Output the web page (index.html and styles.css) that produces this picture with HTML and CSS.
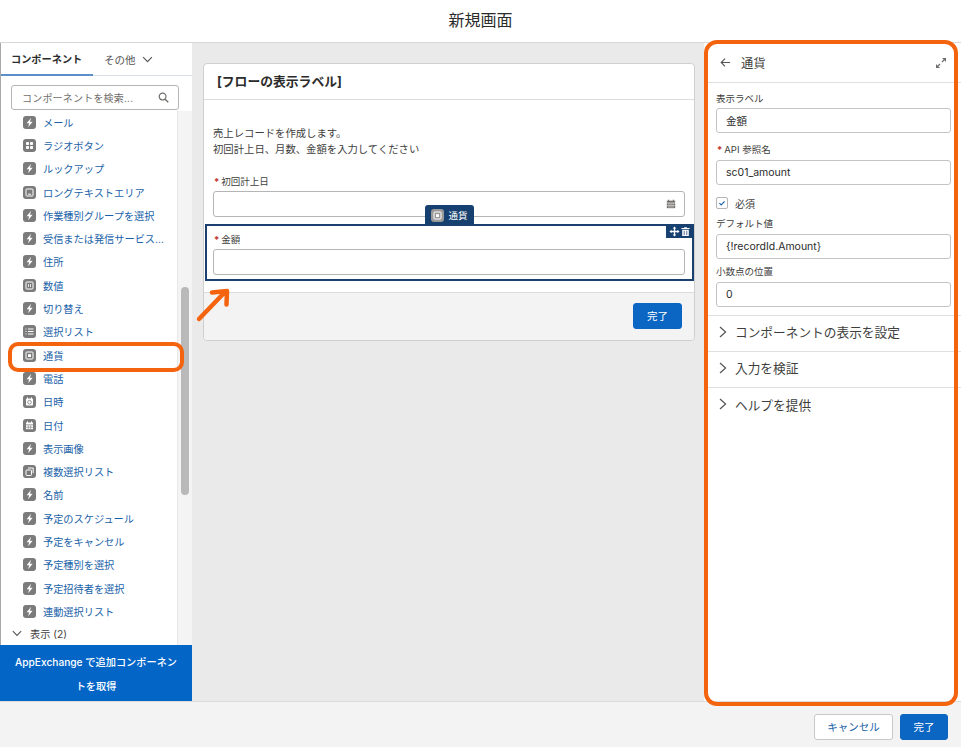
FILE: index.html
```html
<!DOCTYPE html>
<html lang="ja">
<head>
<meta charset="utf-8">
<title>新規画面</title>
<link rel="stylesheet" href="styles.css">
</head>
<body>
<svg class="defs" width="0" height="0">
  <symbol id="i-bolt" viewBox="0 0 13 13"><path d="M8.200 1.800 3.600 7.200h2.500l-.9 4 4.400-5.500H6.900z" fill="#fff"/></symbol>
  <symbol id="i-grid" viewBox="0 0 13 13"><g fill="#fff"><rect x="3" y="3" width="3" height="3" rx=".8"/><rect x="7" y="3" width="3" height="3" rx=".8"/><rect x="3" y="7" width="3" height="3" rx=".8"/><rect x="7" y="7" width="3" height="3" rx=".8"/></g></symbol>
  <symbol id="i-box" viewBox="0 0 13 13"><rect x="3" y="3" width="7" height="7" rx=".8" fill="none" stroke="#fff"/><path d="M8 8.200H5" stroke="#fff"/></symbol>
  <symbol id="i-num" viewBox="0 0 13 13"><rect x="3" y="3" width="7" height="7" rx=".8" fill="none" stroke="#fff"/><path d="M5.500 5v3M7.500 5v3" stroke="#fff" stroke-width=".8"/></symbol>
  <symbol id="i-list" viewBox="0 0 13 13"><path d="M5 4h5.500M5 6.500h5.500M5 9h5.500" stroke="#fff"/><path d="M2.500 4h1M2.500 6.500h1M2.500 9h1" stroke="#fff"/></symbol>
  <symbol id="i-cur" viewBox="0 0 13 13"><rect x="3" y="3" width="7" height="7" rx=".8" fill="none" stroke="#fff"/><rect x="5" y="5.200" width="3" height="2.800" fill="#fff"/></symbol>
  <symbol id="i-clock" viewBox="0 0 13 13"><rect x="3" y="3.500" width="7" height="7" rx="1" fill="#fff"/><path d="M4.500 2.400v2M8.500 2.400v2" stroke="#fff"/><circle cx="6.500" cy="7.200" r="1.800" fill="none" stroke="#7b7b7b" stroke-width=".8"/></symbol>
  <symbol id="i-cal" viewBox="0 0 13 13"><path d="M4.500 2.400v2M8.500 2.400v2" stroke="#fff"/><rect x="3" y="3.500" width="7" height="2" fill="#fff"/><rect x="3" y="6.200" width="7" height="4" fill="#fff"/><path d="M5.300 6.200v4M7.700 6.200v4M3 8.200h7" stroke="#7b7b7b" stroke-width=".6"/></symbol>
  <symbol id="i-multi" viewBox="0 0 13 13"><rect x="3" y="5" width="5.500" height="5.500" rx=".8" fill="none" stroke="#fff"/><path d="M5 3h5.200v5.200" fill="none" stroke="#fff"/></symbol>
</svg>

<div class="app">
  <header class="top">新規画面</header>
  <main class="main">
    <aside class="side">
      <div class="tabs">
        <span class="tab tab-on">コンポーネント</span>
        <span class="tab tab-more">その他
          <svg class="chev" viewBox="0 0 12 8" width="11" height="7"><path d="M1 1.200 6 6.400l5-5.200" fill="none" stroke="#555" stroke-width="1.300"/></svg>
        </span>
      </div>
      <div class="search-wrap">
        <div class="search">
          <span>コンポーネントを検索...</span>
          <svg viewBox="0 0 12 12" width="11" height="11"><circle cx="5" cy="5" r="3.700" fill="none" stroke="#706e6b" stroke-width="1.300"/><path d="m7.800 7.800 3.400 3.400" stroke="#706e6b" stroke-width="1.500"/></svg>
        </div>
      </div>
      <div class="list-area">
        <ul class="list">
          <li class="row"><svg class="ic"><use href="#i-bolt"/></svg>メール</li>
          <li class="row"><svg class="ic"><use href="#i-grid"/></svg>ラジオボタン</li>
          <li class="row"><svg class="ic"><use href="#i-bolt"/></svg>ルックアップ</li>
          <li class="row"><svg class="ic"><use href="#i-box"/></svg>ロングテキストエリア</li>
          <li class="row"><svg class="ic"><use href="#i-bolt"/></svg>作業種別グループを選択</li>
          <li class="row"><svg class="ic"><use href="#i-bolt"/></svg>受信または発信サービス...</li>
          <li class="row"><svg class="ic"><use href="#i-bolt"/></svg>住所</li>
          <li class="row"><svg class="ic"><use href="#i-num"/></svg>数値</li>
          <li class="row"><svg class="ic"><use href="#i-bolt"/></svg>切り替え</li>
          <li class="row"><svg class="ic"><use href="#i-list"/></svg>選択リスト</li>
          <li class="row"><svg class="ic"><use href="#i-cur"/></svg>通貨</li>
          <li class="row"><svg class="ic"><use href="#i-bolt"/></svg>電話</li>
          <li class="row"><svg class="ic"><use href="#i-clock"/></svg>日時</li>
          <li class="row"><svg class="ic"><use href="#i-cal"/></svg>日付</li>
          <li class="row"><svg class="ic"><use href="#i-bolt"/></svg>表示画像</li>
          <li class="row"><svg class="ic"><use href="#i-multi"/></svg>複数選択リスト</li>
          <li class="row"><svg class="ic"><use href="#i-bolt"/></svg>名前</li>
          <li class="row"><svg class="ic"><use href="#i-bolt"/></svg>予定のスケジュール</li>
          <li class="row"><svg class="ic"><use href="#i-bolt"/></svg>予定をキャンセル</li>
          <li class="row"><svg class="ic"><use href="#i-bolt"/></svg>予定種別を選択</li>
          <li class="row"><svg class="ic"><use href="#i-bolt"/></svg>予定招待者を選択</li>
          <li class="row"><svg class="ic"><use href="#i-bolt"/></svg>連動選択リスト</li>
          <li class="group"><svg class="chev" viewBox="0 0 12 8" width="10" height="7"><path d="M1 1.200 6 6.400l5-5.200" fill="none" stroke="#555" stroke-width="1.300"/></svg>表示 (2)</li>
        </ul>
        <div class="track"><div class="thumb"></div></div>
      </div>
      <div class="exchange">AppExchange で追加コンポーネントを取得</div>
    </aside>

    <section class="canvas">
      <div class="card">
        <div class="card-head">[フローの表示ラベル]</div>
        <div class="card-body">
          <p class="intro">売上レコードを作成します。<br>初回計上日、月数、金額を入力してください</p>
          <div class="field">
            <div class="flabel"><span class="req">*</span>初回計上日</div>
            <div class="finput">
              <svg viewBox="0 0 12 12" width="10" height="10"><path d="M3.200.8v2M8.800.8v2" stroke="#706e6b" stroke-width="1.200"/><path d="M1 2h10v2.400H1z" fill="#706e6b"/><path d="M1 5.200h10V11H1z" fill="#706e6b"/><path d="M3.600 5.200V11M6 5.200V11M8.400 5.200V11M1 8h10" stroke="#fff" stroke-width=".6"/></svg>
            </div>
          </div>
          <div class="selected">
            <div class="sel-tab"><span class="sel-ic"><svg viewBox="0 0 13 13" width="13" height="13"><rect x="3" y="3" width="7" height="7" rx=".8" fill="none" stroke="#fff"/><rect x="5" y="5.200" width="3" height="2.800" fill="#fff"/></svg></span>通貨</div>
            <div class="sel-act">
              <svg viewBox="0 0 12 12" width="11" height="11"><path d="M6 .5 8 2.800H6.700v2.500h2.500V4L11.500 6 9.200 8V6.700H6.700v2.500H8L6 11.500 4 9.200h1.300V6.700H2.800V8L.5 6l2.300-2v1.300h2.500V2.800H4z" fill="#fff"/></svg>
              <svg viewBox="0 0 12 12" width="11" height="11"><path d="M1.500 2.200h9v1.200h-9zM4.500 1h3v1h-3zM2.400 4.200h7.200V11H2.400z" fill="#fff"/><path d="M4.600 5.200v4.800M7.400 5.200v4.800" stroke="#16406f" stroke-width=".8"/></svg>
            </div>
            <div class="flabel"><span class="req">*</span>金額</div>
            <div class="finput"></div>
          </div>
        </div>
        <div class="card-foot"><button class="btn btn-pri">完了</button></div>
      </div>
    </section>

    <aside class="panel">
      <div class="p-head">
        <svg class="p-back" viewBox="0 0 12 12" width="11" height="11"><path d="M11 6H1.500M5.500 1.800 1.300 6l4.200 4.200" fill="none" stroke="#555" stroke-width="1.200"/></svg>
        <span class="p-title">通貨</span>
        <svg class="p-exp" viewBox="0 0 12 12" width="12" height="12"><path d="M7 1h4v4zM1 11V7l4 4z" fill="#706e6b"/><path d="m9 3-2 2M3 9l2-2" stroke="#706e6b" stroke-width="1.200"/></svg>
      </div>
      <div class="p-form">
        <div class="plabel">表示ラベル</div>
        <div class="pinput">金額</div>
        <div class="plabel plabel-gap"><span class="req">*</span>API 参照名</div>
        <div class="pinput">sc01_amount</div>
        <div class="check"><span class="box"><svg viewBox="0 0 10 10" width="10" height="10"><path d="m2.400 5.200 1.800 1.700 3.400-3.600" fill="none" stroke="#1b5fa8" stroke-width="1.100"/></svg></span>必須</div>
        <div class="plabel plabel-tight">デフォルト値</div>
        <div class="pinput">{!recordId.Amount}</div>
        <div class="plabel plabel-mid">小数点の位置</div>
        <div class="pinput">0</div>
      </div>
      <div class="acc"><svg viewBox="0 0 8 12" width="8" height="12"><path d="m1 1 5.600 5L1 11" fill="none" stroke="#555" stroke-width="1.200"/></svg>コンポーネントの表示を設定</div>
      <div class="acc"><svg viewBox="0 0 8 12" width="8" height="12"><path d="m1 1 5.600 5L1 11" fill="none" stroke="#555" stroke-width="1.200"/></svg>入力を検証</div>
      <div class="acc acc-last"><svg viewBox="0 0 8 12" width="8" height="12"><path d="m1 1 5.600 5L1 11" fill="none" stroke="#555" stroke-width="1.200"/></svg>ヘルプを提供</div>
    </aside>
  </main>
  <footer class="foot">
    <button class="btn btn-sec">キャンセル</button>
    <button class="btn btn-pri btn-end">完了</button>
  </footer>

  <div class="mark mark-panel"></div>
  <div class="mark mark-row"></div>
  <svg class="mark-arrow" viewBox="0 0 40 40" width="40" height="40"><path d="M6 34 31 8M19 7.500l15-1.500-.5 13.500" fill="none" stroke="#f4640f" stroke-width="4.500" stroke-linecap="round" stroke-linejoin="round"/></svg>
</div>
</body>
</html>
```
FILE: styles.css
```css
* { box-sizing: border-box; }
html, body { margin: 0; padding: 0; }
body {
  width: 961px;
  height: 747px;
  overflow: hidden;
  font-family: Inter, "Noto Sans CJK JP", sans-serif;
  color: #3e3e3c;
  background: #fff;
}
.defs { position: absolute; }
.app { position: relative; display: flex; flex-direction: column; height: 747px; }
.top {
  height: 43px;
  flex: none;
  display: flex;
  align-items: center;
  justify-content: center;
  padding-bottom: 5px;
  font-size: 16px;
  color: #2b2b2b;
  background: #fff;
  border-bottom: 1px solid #d8d8d8;
}
.main { flex: 1; display: flex; min-height: 0; }

/* left */
.side {
  width: 192px;
  flex: none;
  display: flex;
  flex-direction: column;
  background: #fff;
  border-left: 1px solid #a8a8a8;
}
.tabs {
  height: 33px;
  flex: none;
  display: flex;
  border-bottom: 1px solid #d8dde6;
  font-size: 10.200px;
}
.tab { display: flex; align-items: center; }
.tab-on {
  width: 92px;
  padding-left: 10px;
  font-weight: 700;
  color: #2b2b2b;
  border-bottom: 2px solid #5b8fc9;
  margin-bottom: -1px;
}
.tab-more { padding-left: 11px; gap: 6px; color: #555; font-size: 10.500px; }
.search-wrap { flex: none; padding: 9px 13px .5px 10px; }
.search {
  height: 25px;
  display: flex;
  align-items: center;
  justify-content: space-between;
  padding: 0 9px 0 10px;
  border: 1px solid #b5b5b5;
  border-radius: 3px;
  font-size: 10px;
  letter-spacing: .2px;
  color: #706e6b;
}
.list-area { flex: 1; min-height: 0; position: relative; display: flex; }
.list {
  flex: 1;
  list-style: none;
  margin: 0;
  padding: 0;
  overflow: hidden;
  border-right: 1px solid #e8e8e8;
}
.row {
  height: 23.300px;
  display: flex;
  align-items: center;
  gap: 7px;
  padding-left: 22px;
  font-size: 10.200px;
  color: #1a62a8;
  white-space: nowrap;
}
.ic {
  width: 13px;
  height: 13px;
  flex: none;
  border-radius: 3px;
  background: #7b7b7b;
}
.group {
  height: 21px;
  display: flex;
  align-items: center;
  gap: 8px;
  padding-left: 11px;
  font-size: 10.200px;
  color: #3e3e3c;
}
.track { width: 14px; flex: none; background: #f4f4f4; padding: 176.500px 3px 0 3px; }
.thumb { width: 8px; height: 208px; border-radius: 4px; background: #b9b9b9; }
.exchange {
  height: 56px;
  flex: none;
  margin-left: -1px;
  background: #0366c7;
  color: #fff;
  font-size: 10.200px;
  font-weight: 500;
  line-height: 24px;
  text-align: center;
  padding: 4.500px 12px 0;
}

/* centre */
.canvas { width: 512px; flex: none; background: #ebeaea; padding: 20px 9px 0 11px; }
.card {
  height: 278px;
  background: #fff;
  border: 1px solid #cfcfcf;
  border-radius: 4px;
  display: flex;
  flex-direction: column;
}
.card-head {
  height: 36px;
  flex: none;
  display: flex;
  align-items: center;
  padding: 0 0 3px 13px;
  font-size: 12.800px;
  font-weight: 700;
  color: #2b2b2b;
  border-bottom: 1px solid #dcdcdc;
}
.card-body { flex: 1; padding: 0 0 0 1px; }
.intro {
  margin: 25px 0 0 8px;
  font-size: 10.350px;
  line-height: 16px;
  color: #3e3e3c;
}
.field { margin: 18px 9px 0 8px; }
.flabel { font-size: 9.500px; line-height: 14px; color: #3e3e3c; display: flex; gap: 2px; padding-left: 1px; }
.req { color: #c23934; font-weight: 700; }
.finput {
  height: 26px;
  margin-top: 2px;
  background: #fff;
  border: 1px solid #b5b5b5;
  border-radius: 3px;
  display: flex;
  align-items: center;
  justify-content: flex-end;
  padding-right: 8px;
}
.selected {
  position: relative;
  height: 57px;
  margin-top: 7px;
  padding: 7px 7px 0 6px;
  border: 2px solid #1b3f6e;
}
.sel-tab {
  position: absolute;
  left: 218px;
  top: -21px;
  width: 49px;
  height: 20px;
  background: #16406f;
  border-radius: 3px 3px 0 0;
  color: #fff;
  font-size: 9.500px;
  display: flex;
  align-items: center;
  justify-content: center;
  gap: 4px;
}
.sel-ic { width: 13px; height: 13px; border-radius: 3px; background: #9a9a9a; display: flex; }
.sel-act {
  position: absolute;
  right: -1px;
  top: -1px;
  width: 27px;
  height: 13px;
  background: #16406f;
  display: flex;
  align-items: center;
  justify-content: center;
  gap: 0;
}
.card-foot {
  height: 48px;
  flex: none;
  background: #f3f3f3;
  border-top: 1px solid #dcdcdc;
  border-radius: 0 0 4px 4px;
  display: flex;
  justify-content: flex-end;
  align-items: center;
  padding: 0 12px 2px 0;
}
.btn {
  height: 26px;
  border-radius: 3px;
  font-family: inherit;
  font-size: 10.500px;
  padding: 0;
}
.btn-pri { width: 49px; background: #0b65c2; border: 1px solid #0b65c2; color: #fff; }
.btn-end { width: 48px; }
.btn-sec { width: 79px; background: #fff; border: 1px solid #c9c9c9; color: #1a62a8; }

/* right */
.panel { flex: 1; background: #fff; }
.p-head {
  height: 40px;
  display: flex;
  align-items: center;
  padding: 0 14px 0 16px;
  border-bottom: 1px solid #e0e0e0;
}
.p-title { font-size: 12.300px; margin-left: 10px; color: #3e3e3c; flex: 1; }
.p-form { padding: 9px 10px 8px 12px; border-bottom: 1px solid #e0e0e0; }
.plabel { font-size: 9.500px; line-height: 14px; color: #3e3e3c; display: flex; gap: 2px; margin-bottom: 2px; }
.plabel-gap { margin-top: 10px; margin-bottom: 3px; padding-left: 1px; }
.plabel-tight { margin-top: 7px; margin-bottom: 3px; }
.plabel-mid { margin-top: 6px; margin-bottom: 3px; }
.pinput {
  height: 25px;
  padding-left: 9px;
  display: flex;
  align-items: center;
  font-size: 10.500px;
  color: #2b2b2b;
  border: 1px solid #c4c4c4;
  border-radius: 3px;
}
.check {
  margin-top: 11px;
  height: 14px;
  display: flex;
  align-items: center;
  gap: 7px;
  font-size: 10px;
}
.box {
  width: 12px;
  height: 12px;
  border: 1px solid #b5b5b5;
  border-radius: 2px;
  display: flex;
  align-items: center;
  justify-content: center;
}
.acc {
  height: 36px;
  display: flex;
  align-items: center;
  gap: 8px;
  padding: 0 0 4px 15px;
  font-size: 12.700px;
  color: #3e3e3c;
  border-bottom: 1px solid #e0e0e0;
}
.acc-last { border-bottom: 0; }

/* footer */
.foot {
  height: 46px;
  flex: none;
  display: flex;
  justify-content: flex-end;
  align-items: center;
  gap: 7px;
  padding: 4px 13px 0 0;
  background: #f3f3f3;
  border-top: 1px solid #dcdcdc;
}

/* annotations */
.mark { position: absolute; border: 4px solid #f4640f; background: transparent; }
.mark-panel { left: 704px; top: 40px; width: 254px; height: 666px; border-radius: 13px; }
.mark-row { left: 8px; top: 342px; width: 176px; height: 30px; border-radius: 10px; }
.mark-arrow { position: absolute; left: 193px; top: 285px; }
```
